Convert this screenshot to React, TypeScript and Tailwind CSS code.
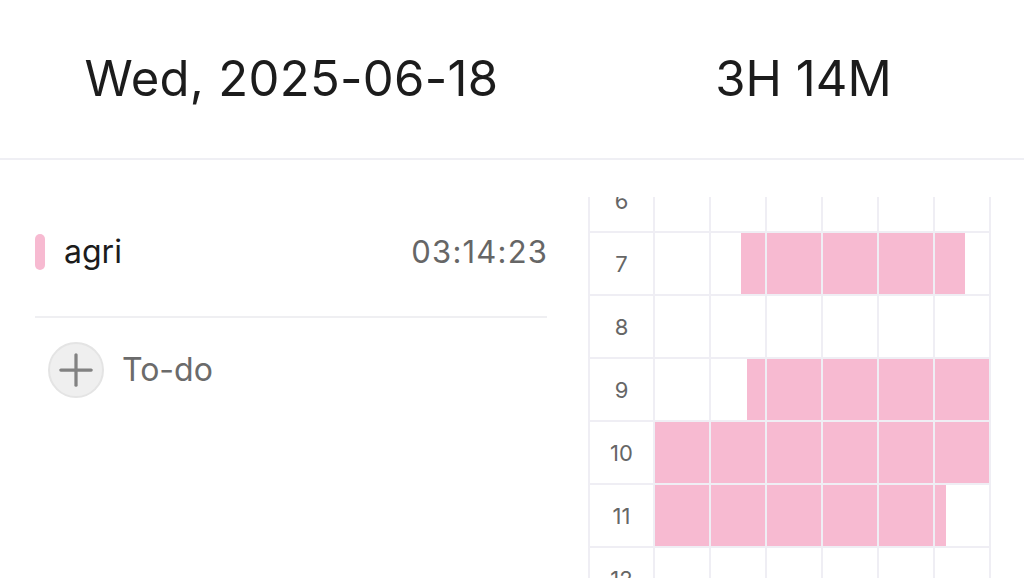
import { Plus } from "lucide-react";

type Span = { hour: number; from: number; to: number };

// tracked minutes per hour, used to paint the timeline
const sessions: Span[] = [
  { hour: 7, from: 15.6, to: 55.6 },
  { hour: 9, from: 16.7, to: 60 },
  { hour: 10, from: 0, to: 60 },
  { hour: 11, from: 0, to: 52 },
];

const hours = Array.from({ length: 24 }, (_, i) => i);
const slots = [0, 1, 2, 3, 4, 5];

function fillFor(hour: number, slot: number) {
  const span = sessions.find((s) => s.hour === hour);
  if (!span) return null;
  const start = Math.max(span.from, slot * 10);
  const end = Math.min(span.to, slot * 10 + 10);
  if (end <= start) return null;
  return { left: `${(start - slot * 10) * 10}%`, width: `${(end - start) * 10}%` };
}

function Timeline() {
  return (
    <div
      ref={(el) => {
        if (el) el.scrollTop = 407;
      }}
      className="h-[381px] overflow-y-auto [scrollbar-width:none]"
    >
      <div className="grid w-[403px] grid-cols-[63px_repeat(6,54px)] auto-rows-[61px] gap-[2px] bg-[#efeef4] p-[2px]">
        {hours.map((hour) => (
          <div key={hour} className="contents">
            <div className="flex items-center justify-center bg-white pt-[2px] text-[22px] text-[#666]">
              {hour}
            </div>
            {slots.map((slot) => {
              const fill = fillFor(hour, slot);
              return (
                <div key={slot} className="relative bg-white">
                  {fill && <div className="absolute inset-y-0 bg-[#f7bad1]" style={fill} />}
                </div>
              );
            })}
          </div>
        ))}
      </div>
    </div>
  );
}

export default function App() {
  return (
    <div className="h-[578px] w-[1024px] overflow-hidden bg-white font-['Inter','Liberation_Sans',sans-serif]">
      <header className="grid h-[160px] grid-cols-[583px_1fr] items-center border-b-2 border-[#efeff4] text-[49px] text-[#1c1c1c]">
        <div className="text-center tracking-[0.3px]">Wed, 2025-06-18</div>
        <div className="text-center">3H 14M</div>
      </header>

      <div className="flex">
        <section className="w-[588px] pl-[35px] pr-[41px] pt-[74px]">
          <div className="flex h-[36px] items-center">
            <span className="h-[36px] w-[10px] rounded-full bg-[#f7bad1]" />
            <span className="ml-[19px] text-[32px] text-[#1c1c1c]">agri</span>
            <span className="ml-auto mr-[-1.2px] text-[31px] tracking-[1.2px] text-[#666]">03:14:23</span>
          </div>
          <div className="mt-[46px] h-[2px] bg-[#efeff2]" />
          <button className="mt-[24px] ml-[13px] flex items-center">
            <span className="flex h-[56px] w-[56px] items-center justify-center rounded-full border-2 border-[#e4e4e4] bg-[#efefef]">
              <Plus size={52} strokeWidth={1.5} className="text-[#828282]" />
            </span>
            <span className="ml-[18px] text-[32px] text-[#6b6b6b]">To-do</span>
          </button>
        </section>

        <section className="flex-1 pt-[37px]">
          <Timeline />
        </section>
      </div>
    </div>
  );
}
